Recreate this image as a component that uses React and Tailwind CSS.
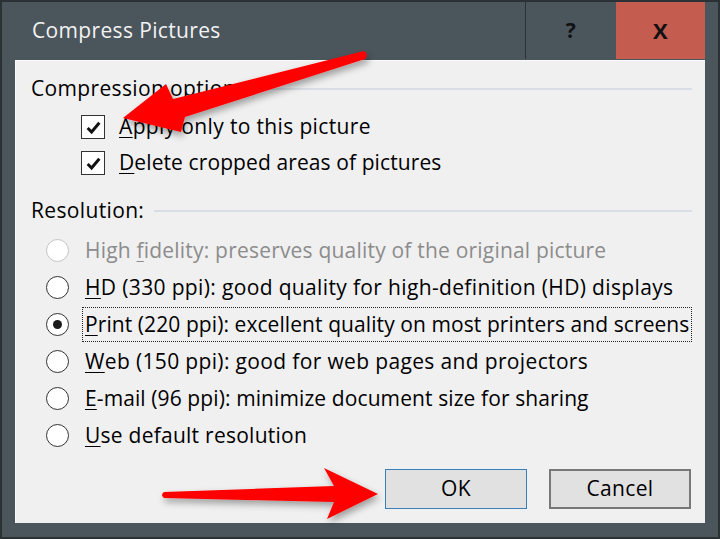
import React from "react";

const font = { fontFamily: '"Open Sans", "Noto Sans", sans-serif' };

const Key = ({ children }) => <span className="underline underline-offset-[3px] decoration-1">{children}</span>;

const Checkbox = () => (
  <span className="w-[24px] h-[24px] border-[1.5px] border-[#333] bg-white flex items-center justify-center shrink-0">
    <svg width="17" height="17" viewBox="0 0 16 16">
      <path d="M2.5 8.5 L6.2 12.2 L13.5 3.5" fill="none" stroke="#111" strokeWidth="2.8" />
    </svg>
  </span>
);

const Radio = ({ checked, disabled }) => (
  <span
    className={`w-[23px] h-[23px] rounded-full border-[1.5px] bg-white flex items-center justify-center shrink-0 ${
      disabled ? "border-[#c4c4c4]" : "border-[#333]"
    }`}
  >
    {checked && <span className="w-[9px] h-[9px] rounded-full bg-[#1a1a1a]" />}
  </span>
);

const GroupHeader = ({ children }) => (
  <div className="h-[28px] flex items-center pl-[15px] pr-[13px] gap-[10px]">
    <span className="whitespace-nowrap">{children}</span>
    <span className="flex-1 h-[2px] bg-[#d8dee3]" />
  </div>
);

const radios = [
  { key: "f", pre: "High ", post: "idelity: preserves quality of the original picture", disabled: true, tr: "tracking-[0.2px]" },
  { key: "H", pre: "", post: "D (330 ppi): good quality for high-definition (HD) displays", tr: "tracking-[0.35px]" },
  { key: "P", pre: "", post: "rint (220 ppi): excellent quality on most printers and screens", checked: true, tr: "tracking-[0.08px]" },
  { key: "W", pre: "", post: "eb (150 ppi): good for web pages and projectors", tr: "tracking-[0.35px]" },
  { key: "E", pre: "", post: "-mail (96 ppi): minimize document size for sharing", tr: "tracking-[0.1px]" },
  { key: "U", pre: "", post: "se default resolution", tr: "tracking-[0.25px]" },
];

export default function App() {
  return (
    <div
      style={font}
      className="w-[720px] h-[539px] bg-[#4b555c] border-2 border-[#2c3136] flex flex-col relative overflow-hidden text-[21px] tracking-[0.35px] text-black"
    >
      <div className="h-[58px] flex items-stretch pr-[13px]">
        <div className="flex-1 flex items-center pl-[30px] text-[#f2f2f2]">Compress Pictures</div>
        <div className="w-[91px] h-[57px] border-l border-[#2c3136] flex items-center justify-center font-bold text-[#111]">?</div>
        <div className="w-[89px] h-[57px] bg-[#c45c50] flex items-center justify-center text-[22px] font-bold text-[#111]">X</div>
      </div>

      <div className="flex-1 mx-[13px] mb-[14px] bg-[#f0f0f0] border-l border-t border-[#fafafa] flex flex-col pt-[14px]">
        <GroupHeader>Compression options:</GroupHeader>
        <div className="mt-[6px] flex flex-col">
          <div className="h-[36px] flex items-center pl-[65px] gap-[14px]">
            <Checkbox />
            <span><Key>A</Key>pply only to this picture</span>
          </div>
          <div className="h-[36px] flex items-center pl-[65px] gap-[14px] tracking-[0.1px]">
            <Checkbox />
            <span><Key>D</Key>elete cropped areas of pictures</span>
          </div>
        </div>

        <div className="mt-[16px]">
          <GroupHeader>Resolution:</GroupHeader>
        </div>

        <div className="mt-[7px] flex flex-col">
          {radios.map((r) => (
            <div key={r.key} className={`h-[37px] flex items-center pl-[30px] gap-[13px] ${r.tr}`}>
              <Radio checked={r.checked} disabled={r.disabled} />
              <span
                className={`whitespace-nowrap px-[2px] py-[1px] border border-dotted ${
                  r.checked ? "border-[#222]" : "border-transparent"
                } ${r.disabled ? "text-[#8c8c8c]" : "text-black"}`}
              >
                {r.pre}
                <Key>{r.key}</Key>
                {r.post}
              </span>
            </div>
          ))}
        </div>

        <div className="mt-[15px] flex justify-end gap-[22px] pr-[14px]">
          <button className="w-[142px] h-[40px] bg-[#e1e1e1] border border-[#3b7fb8]">OK</button>
          <button className="w-[142px] h-[40px] bg-[#e1e1e1] border-2 border-[#787878]">Cancel</button>
        </div>
      </div>

      <svg className="absolute left-0 top-0 pointer-events-none" width="720" height="539" viewBox="0 0 720 539">
        <defs>
          <filter id="sh" x="-20%" y="-50%" width="140%" height="200%">
            <feDropShadow dx="2" dy="4" stdDeviation="3.5" floodColor="#000" floodOpacity="0.35" />
          </filter>
        </defs>
        <g filter="url(#sh)" fill="#ff0000">
          <path d="M121 116 L164 82 L171 97 L362 49 Q367 52 363 57 L183 115 L179 130 Z" />
          <path d="M162 490 L332 484 L322 466 L376 492 L325 517 L332 500 L162 496 Q158 493 162 490 Z" />
        </g>
      </svg>
    </div>
  );
}
